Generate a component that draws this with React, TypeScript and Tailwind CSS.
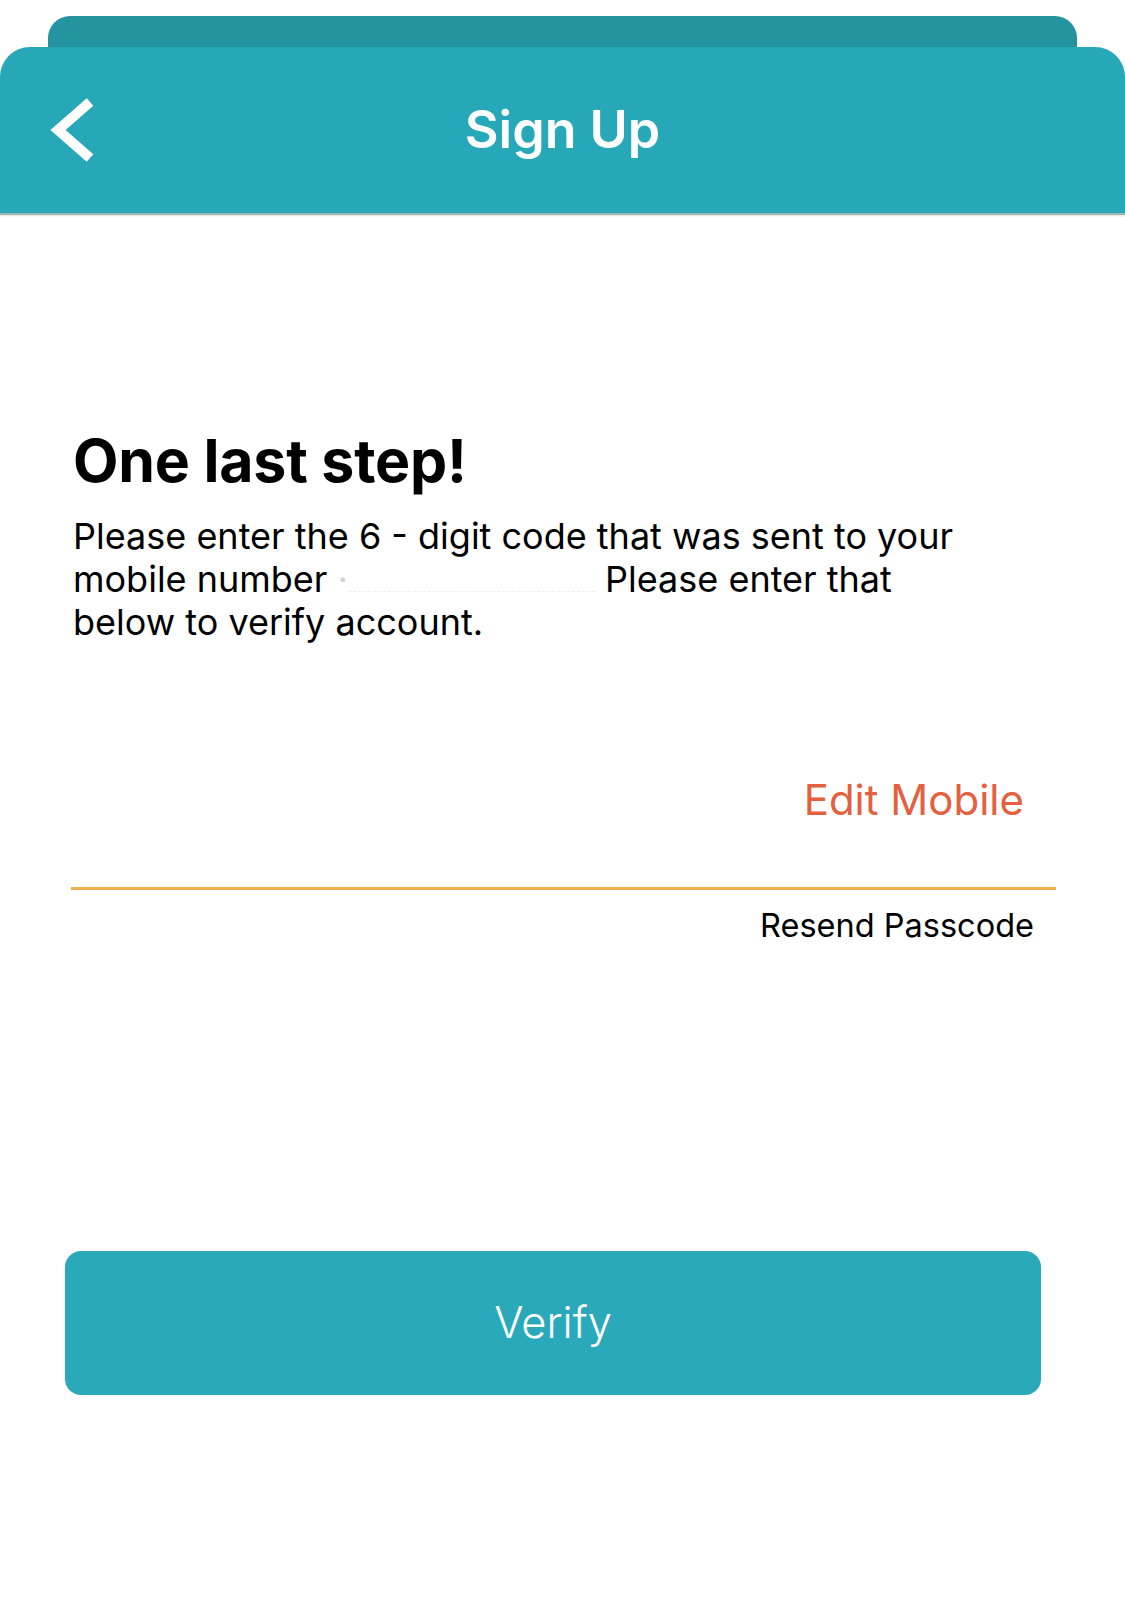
import { ChangeEvent, useState } from 'react';

const FONT = { fontFamily: 'Inter, "Noto Sans", "Liberation Sans", sans-serif' };

function BackChevron() {
  return (
    <svg width="50" height="70" viewBox="0 0 50 70" fill="none">
      <polyline
        points="44,7 12,35 44,63"
        stroke="#ffffff"
        strokeWidth="10"
        strokeLinecap="butt"
        strokeLinejoin="miter"
      />
    </svg>
  );
}

export default function App() {
  const [code, setCode] = useState('');

  return (
    <div className="w-[1125px] h-[1598px] bg-white overflow-hidden flex flex-col" style={FONT}>
      {/* Stacked header */}
      <div className="pt-[16px]">
        <div className="mx-[48px] h-[31px] rounded-t-[22px] bg-[#2494a1]" />
        <div className="h-[168px] rounded-t-[30px] bg-[#27a8b8] border-b-2 border-[#9fb6b9] shadow-[0_1px_2px_rgba(0,0,0,0.12)] flex items-center">
          <button className="w-[120px] pl-[46px] flex items-center">
            <BackChevron />
          </button>
          <h1 className="flex-1 text-center text-white text-[52px] leading-none font-semibold">
            Sign Up
          </h1>
          <div className="w-[120px]" />
        </div>
      </div>

      {/* Body */}
      <div className="px-[73px] mt-[217px]">
        <h2 className="text-[59px] leading-[58px] font-bold text-black tracking-[-0.2px]">
          One last step!
        </h2>
        <p className="mt-[25px] text-[36px] leading-[43px] text-black">
          <span className="block whitespace-nowrap">Please enter the 6 - digit code that was sent to your</span>
          <span className="block whitespace-nowrap">
            mobile number <span className="text-[#d4d4d4]">·</span>
            <span className="inline-block w-[247px] h-[22px] border-b border-dashed border-[#eeeeee] align-baseline" />{' '}
            Please enter that
          </span>
          <span className="block whitespace-nowrap">below to verify account.</span>
        </p>
      </div>

      {/* Code input */}
      <div className="ml-[71px] w-[985px] mt-[131px]">
        <div className="flex items-center h-[50px]">
          <input
            value={code}
            onChange={(e: ChangeEvent<HTMLInputElement>) => setCode(e.target.value.replace(/\D/g, '').slice(0, 6))}
            className="flex-1 min-w-0 h-full bg-transparent outline-none text-[36px] text-black"
            inputMode="numeric"
          />
          <button className="pr-[32px] text-[42px] leading-[50px] text-[#e4603f]">Edit Mobile</button>
        </div>
        <div className="mt-[62px] h-[3px] bg-[#edb24e]" />
        <div className="mt-[16px] flex justify-end pr-[22px]">
          <button className="text-[32.5px] leading-[40px] text-black">Resend Passcode</button>
        </div>
      </div>

      {/* Verify */}
      <div className="ml-[65px] w-[976px] mt-[305px]">
        <button className="w-full h-[144px] rounded-[16px] bg-[#2aa9bb] text-white text-[43.5px] font-light">
          Verify
        </button>
      </div>
    </div>
  );
}
